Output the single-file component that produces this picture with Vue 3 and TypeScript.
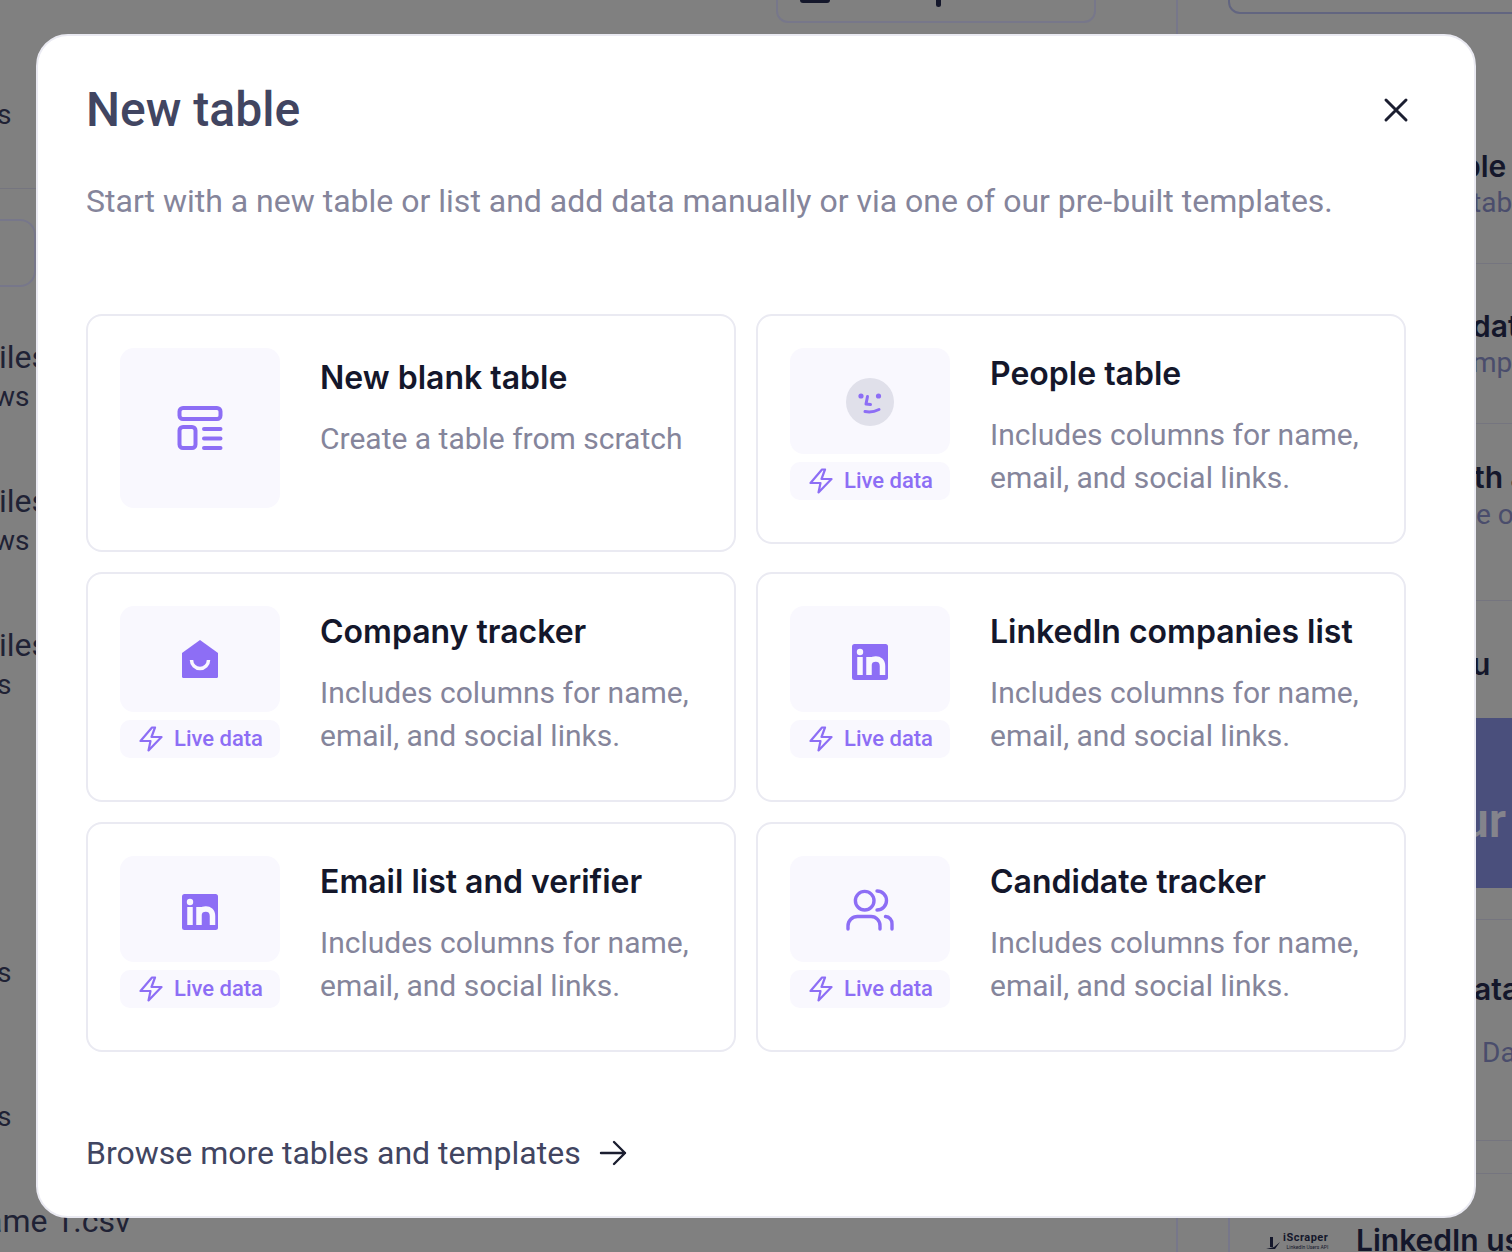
<template>
  <div class="page">
    <!-- page behind the dialog, only the edges show -->
    <div class="backdrop" aria-hidden="true">
      <div class="bg-box bg-top"><span class="bg-blob"></span><span class="bg-tail"></span></div>
      <div class="bg-box bg-dotted"></div>
      <div class="bg-box bg-left"></div>
      <div class="bg-vline vl1"></div>
      <div class="bg-vline vl2"></div>
      <div class="bg-vline vl3"></div>
      <div class="bg-rule rule-left"></div>
      <div v-for="y in rules" :key="y" class="bg-rule" :style="{ top: y + 'px' }"></div>
      <span v-for="t in bgTexts" :key="t.text + t.y" class="bg-text" :class="t.cls" :style="{ left: t.x + 'px', top: t.y + 'px' }">{{ t.text }}</span>
      <div class="bg-banner"><span>ur</span></div>
      <div class="bg-logo">
        <svg width="14" height="16" viewBox="0 0 14 16" fill="#14172b">
          <path d="M0 15 L8 13 L14 8 L9 15 Z M4 3 H7 V13 H4 Z" />
        </svg>
        <div class="bg-logo-text">
          <span class="bg-logo-main">iScraper</span>
          <span class="bg-logo-sub">LinkedIn Users API</span>
        </div>
      </div>
    </div>

    <div class="overlay">
      <div class="modal">
        <div class="modal-header">
          <h2>New table</h2>
          <button class="modal-close" aria-label="Close">
            <svg width="26" height="26" viewBox="0 0 26 26" fill="none" stroke="#1b1e30" stroke-width="3" stroke-linecap="round">
              <path d="M3 3 L23 23 M23 3 L3 23" />
            </svg>
          </button>
        </div>
        <p class="modal-sub">Start with a new table or list and add data manually or via one of our pre-built templates.</p>

        <div class="card-grid">
          <div v-for="c in cards" :key="c.title" class="card" :class="{ 'card-blank': c.icon === 'table' }">
            <div class="card-side">
              <div class="icon-box">
                <svg v-if="c.icon === 'table'" class="icon-table" width="48" height="48" viewBox="0 0 48 48" fill="none" stroke="#8d6ef5" stroke-width="4" stroke-linecap="round">
                  <rect x="3.5" y="3" width="41" height="11" rx="3.5" />
                  <rect x="3.5" y="22" width="16" height="21" rx="3.5" />
                  <path d="M28 24 H44.5 M28 33.5 H44.5 M28 43 H44.5" />
                </svg>
                <svg v-else-if="c.icon === 'face'" class="icon-face" width="48" height="48" viewBox="0 0 48 48" fill="none">
                  <circle cx="24" cy="24" r="24" fill="#e0e0ea" />
                  <circle cx="15" cy="18" r="2.6" fill="#8d6ef5" />
                  <circle cx="32.5" cy="18" r="2.6" fill="#8d6ef5" />
                  <path d="M21.5 18.5 L20 26 L24.5 26.5 M19 33.5 Q26 35 33 31.5" stroke="#8d6ef5" stroke-width="3" stroke-linecap="round" stroke-linejoin="round" />
                </svg>
                <svg v-else-if="c.icon === 'house'" width="36" height="38" viewBox="0 0 36 38">
                  <path d="M18 0 L36 13 V36.5 Q36 38 34.5 38 H1.5 Q0 38 0 36.500 V13 Z" fill="#8d6ef5" />
                  <path d="M9.500 20 A8.500 8.500 0 0 0 26.500 20" fill="none" stroke="#f9f8fe" stroke-width="3.5" />
                </svg>
                <svg v-else-if="c.icon === 'linkedin'" class="icon-linkedin" width="36" height="36" viewBox="0 0 36 36">
                  <rect width="36" height="36" rx="2.500" fill="#8d6ef5" />
                  <circle cx="8" cy="8" r="3.200" fill="#f9f8fe" />
                  <path d="M8 13 V31 M17 13 V31 M17 21 C17 13.500 30.500 12 30.500 22 V31" fill="none" stroke="#f9f8fe" stroke-width="5.500" />
                </svg>
                <svg v-else class="icon-users" width="48" height="44" viewBox="0 0 48 44" fill="none" stroke="#8d6ef5" stroke-width="3.400" stroke-linecap="round">
                  <circle cx="18.700" cy="12.700" r="9.300" />
                  <path d="M31 3 A9.500 9.500 0 0 1 31 22" />
                  <path d="M2 41 V38 A9.500 9.500 0 0 1 11.500 28.500 H25 A9 9 0 0 1 34 38 V41" />
                  <path d="M39.500 28.500 A7 7 0 0 1 46 36 V41" />
                </svg>
              </div>
              <div v-if="c.live" class="live-chip">
                <svg width="24" height="26" viewBox="0 0 24 26" fill="none" stroke="#8d6ef5" stroke-width="2.200" stroke-linejoin="round">
                  <path d="M13 1.500 L1.500 15 H11.500 L9.500 24.500 L22.500 11 H12.500 L16 1.500 Z" />
                </svg>
                <span>Live data</span>
              </div>
            </div>
            <div class="card-text">
              <h3>{{ c.title }}</h3>
              <p>{{ c.desc }}</p>
            </div>
          </div>
        </div>

        <a class="browse">
          <span>Browse more tables and templates</span>
          <svg width="28" height="26" viewBox="0 0 28 26" fill="none" stroke="#1b1e30" stroke-width="2.400" stroke-linecap="round" stroke-linejoin="round">
            <path d="M2 13 H26 M15 2 L26 13 L15 24" />
          </svg>
        </a>
      </div>
    </div>
  </div>
</template>

<script setup lang="ts">
interface TemplateCard {
  title: string
  desc: string
  icon: 'table' | 'face' | 'house' | 'linkedin' | 'users'
  live: boolean
}

const COLUMNS_DESC = 'Includes columns for name, email, and social links.'

const cards: TemplateCard[] = [
  { title: 'New blank table', desc: 'Create a table from scratch', icon: 'table', live: false },
  { title: 'People table', desc: COLUMNS_DESC, icon: 'face', live: true },
  { title: 'Company tracker', desc: COLUMNS_DESC, icon: 'house', live: true },
  { title: 'LinkedIn companies list', desc: COLUMNS_DESC, icon: 'linkedin', live: true },
  { title: 'Email list and verifier', desc: COLUMNS_DESC, icon: 'linkedin', live: true },
  { title: 'Candidate tracker', desc: COLUMNS_DESC, icon: 'users', live: true }
]

const rules = [263, 423, 600, 919, 1140, 1173]

const bgTexts = [
  { text: 's', x: -3, y: 98, cls: 'dark' },
  { text: 'iles', x: -1, y: 338, cls: 'dark big' },
  { text: 'ws', x: -6, y: 380, cls: 'dark' },
  { text: 'iles', x: -1, y: 482, cls: 'dark big' },
  { text: 'ws', x: -6, y: 524, cls: 'dark' },
  { text: 'iles', x: -1, y: 626, cls: 'dark big' },
  { text: 's', x: -3, y: 668, cls: 'dark' },
  { text: 's', x: -3, y: 956, cls: 'dark' },
  { text: 's', x: -3, y: 1100, cls: 'dark' },
  { text: 'ame 1.csv', x: -15, y: 1202, cls: 'dark big' },
  { text: 'ble', x: 1462, y: 148, cls: 'bold' },
  { text: 'tab', x: 1472, y: 186, cls: 'muted' },
  { text: 'dat', x: 1472, y: 308, cls: 'bold' },
  { text: 'mpo', x: 1472, y: 346, cls: 'muted' },
  { text: 'th a', x: 1474, y: 459, cls: 'bold' },
  { text: 'e o', x: 1476, y: 498, cls: 'muted' },
  { text: 'u', x: 1472, y: 646, cls: 'bold' },
  { text: 'ata', x: 1474, y: 971, cls: 'bold' },
  { text: 'Da', x: 1482, y: 1036, cls: 'muted' },
  { text: 'LinkedIn us', x: 1356, y: 1222, cls: 'bold' }
]
</script>

<style>
html,
body {
  margin: 0;
  background: #808080;
}
</style>

<style scoped>
.page {
  position: relative;
  width: 1512px;
  height: 1252px;
  overflow: hidden;
  background: #808080;
  font-family: Roboto, "Liberation Sans", sans-serif;
}

.backdrop {
  position: absolute;
  inset: 0;
}

.bg-box {
  position: absolute;
  box-sizing: border-box;
  border: 2px solid #77778a;
}

.bg-top {
  left: 776px;
  top: -40px;
  width: 320px;
  height: 63px;
  border-radius: 12px;
}

.bg-blob {
  position: absolute;
  left: 22px;
  top: 38px;
  width: 30px;
  height: 3px;
  border-radius: 0 0 14px 14px;
  background: #14172b;
}

.bg-tail {
  position: absolute;
  left: 158px;
  top: 38px;
  width: 5px;
  height: 7px;
  border-radius: 0 0 4px 4px;
  background: #14172b;
}

.bg-dotted {
  left: 1228px;
  top: -40px;
  width: 300px;
  height: 54px;
  border-radius: 12px;
  border-color: #626580;
}

.bg-left {
  left: -100px;
  top: 219px;
  width: 136px;
  height: 68px;
  border-radius: 16px;
}

.bg-vline {
  position: absolute;
  width: 2px;
  background: #77778a;
}

.vl1 {
  left: 1176px;
  top: 0;
  height: 34px;
}

.vl2 {
  left: 1176px;
  top: 1218px;
  height: 34px;
}

.vl3 {
  left: 1228px;
  top: 1218px;
  height: 34px;
}

.bg-rule {
  position: absolute;
  left: 1476px;
  right: 0;
  height: 1px;
  background: #75757f;
}

.rule-left {
  left: 0;
  right: auto;
  top: 188px;
  width: 36px;
}

.bg-text {
  position: absolute;
  font-size: 28px;
  line-height: 34px;
  white-space: nowrap;
}

.bg-text.dark {
  color: #1f2235;
}

.bg-text.big {
  font-size: 32px;
  line-height: 38px;
}

.bg-text.bold {
  color: #14172b;
  font-family: Inter, Roboto, sans-serif;
  font-size: 30px;
  font-weight: 600;
  line-height: 36px;
}

.bg-text.muted {
  color: #4a4d6c;
}

.bg-banner {
  position: absolute;
  left: 1440px;
  right: 0;
  top: 718px;
  height: 170px;
  box-sizing: border-box;
  display: flex;
  align-items: center;
  padding: 34px 0 0 22px;
  background: #4a4f7c;
  color: #84848c;
  font-size: 48px;
  font-weight: 600;
}

.bg-logo {
  position: absolute;
  left: 1266px;
  top: 1232px;
  display: flex;
  align-items: flex-end;
  gap: 3px;
  color: #14172b;
}

.bg-logo-text {
  display: flex;
  flex-direction: column;
  align-items: flex-end;
}

.bg-logo-main {
  font-size: 11px;
  font-weight: 700;
  line-height: 12px;
  letter-spacing: 0.5px;
}

.bg-logo-sub {
  font-size: 5px;
  line-height: 6px;
}

.overlay {
  position: absolute;
  inset: 0;
  padding: 34px 36px;
  box-sizing: border-box;
}

.modal {
  box-sizing: border-box;
  width: 1440px;
  height: 1184px;
  padding: 46px 68px 0 48px;
  background: #fff;
  border: 2px solid #eaeaf2;
  border-radius: 32px;
}

.modal-header {
  display: flex;
  align-items: center;
  justify-content: space-between;
  height: 56px;
}

.modal-header h2 {
  margin: 0;
  color: #414561;
  font-size: 48px;
  font-weight: 500;
  line-height: 56px;
}

.modal-close {
  display: flex;
  padding: 0;
  margin-right: -3px;
  background: none;
  border: none;
}

.modal-sub {
  margin: 41px 0 0;
  color: #85859b;
  font-size: 32px;
  line-height: 44px;
  white-space: nowrap;
}

.card-grid {
  display: grid;
  grid-template-columns: 650px 650px;
  gap: 20px;
  align-items: start;
  margin-top: 91px;
}

.card {
  box-sizing: border-box;
  display: flex;
  gap: 40px;
  padding: 32px 32px 42px;
  border: 2px solid #eaeaf2;
  border-radius: 16px;
}

.card-side {
  display: flex;
  flex-direction: column;
  flex: none;
  gap: 8px;
  width: 160px;
}

.icon-box {
  display: flex;
  align-items: center;
  justify-content: center;
  height: 106px;
  background: #f9f8fe;
  border-radius: 14px;
}

.icon-table {
  margin-top: 2px;
}

.icon-face {
  margin-top: 2px;
}

.icon-users {
  margin-top: 1px;
}

.icon-linkedin {
  margin-top: 6px;
}

.card-blank .icon-box {
  height: 160px;
}

.live-chip {
  display: flex;
  align-items: center;
  justify-content: center;
  gap: 11px;
  height: 38px;
  padding: 0 0 1px 2px;
  box-sizing: border-box;
  background: #f9f8fe;
  border-radius: 10px;
  color: #8d6ef5;
  font-size: 22px;
  font-weight: 500;
}

.card-text h3 {
  margin: 0;
  color: #14172b;
  font-family: Inter, Roboto, sans-serif;
  font-size: 32px;
  font-weight: 600;
  line-height: 52px;
}

.card-blank .card-text {
  padding-top: 4px;
}

.card-text p {
  margin: 13px 0 0;
  color: #85859b;
  font-size: 30px;
  line-height: 43px;
}

.browse {
  display: flex;
  align-items: center;
  gap: 18px;
  margin-top: 81px;
  color: #414561;
  font-size: 32px;
  line-height: 40px;
}
</style>
